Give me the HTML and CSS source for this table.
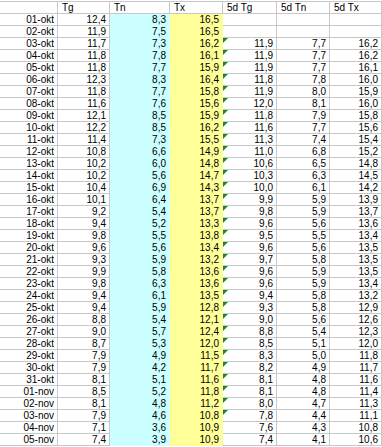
FILE: index.html
```html
<!DOCTYPE html>
<html>
<head>
<meta charset="utf-8">
<link rel="stylesheet" href="styles.css">
</head>
<body>
<div class="sheet">
  <div class="row head"><div class="cell"></div><div class="cell hl">Tg</div><div class="cell hl">Tn</div><div class="cell hl">Tx</div><div class="cell hl">5d Tg</div><div class="cell hl">5d Tn</div><div class="cell hl">5d Tx</div></div>
  <div class="row"><div class="cell">01-okt</div><div class="cell">12,4</div><div class="cell cyan">8,3</div><div class="cell yellow">16,5</div><div class="cell"></div><div class="cell"></div><div class="cell"></div></div>
  <div class="row"><div class="cell">02-okt</div><div class="cell">11,9</div><div class="cell cyan">7,5</div><div class="cell yellow">16,5</div><div class="cell"></div><div class="cell"></div><div class="cell"></div></div>
  <div class="row"><div class="cell">03-okt</div><div class="cell">11,7</div><div class="cell cyan">7,3</div><div class="cell yellow">16,2</div><div class="cell flag">11,9</div><div class="cell">7,7</div><div class="cell">16,2</div></div>
  <div class="row"><div class="cell">04-okt</div><div class="cell">11,8</div><div class="cell cyan">7,8</div><div class="cell yellow">16,1</div><div class="cell flag">11,9</div><div class="cell">7,7</div><div class="cell">16,2</div></div>
  <div class="row"><div class="cell">05-okt</div><div class="cell">11,8</div><div class="cell cyan">7,7</div><div class="cell yellow">15,9</div><div class="cell flag">11,9</div><div class="cell">7,7</div><div class="cell">16,1</div></div>
  <div class="row"><div class="cell">06-okt</div><div class="cell">12,3</div><div class="cell cyan">8,3</div><div class="cell yellow">16,4</div><div class="cell flag">11,8</div><div class="cell">7,8</div><div class="cell">16,0</div></div>
  <div class="row"><div class="cell">07-okt</div><div class="cell">11,8</div><div class="cell cyan">7,7</div><div class="cell yellow">15,8</div><div class="cell flag">11,9</div><div class="cell">8,0</div><div class="cell">15,9</div></div>
  <div class="row"><div class="cell">08-okt</div><div class="cell">11,6</div><div class="cell cyan">7,6</div><div class="cell yellow">15,6</div><div class="cell flag">12,0</div><div class="cell">8,1</div><div class="cell">16,0</div></div>
  <div class="row"><div class="cell">09-okt</div><div class="cell">12,1</div><div class="cell cyan">8,5</div><div class="cell yellow">15,9</div><div class="cell flag">11,8</div><div class="cell">7,9</div><div class="cell">15,8</div></div>
  <div class="row"><div class="cell">10-okt</div><div class="cell">12,2</div><div class="cell cyan">8,5</div><div class="cell yellow">16,2</div><div class="cell flag">11,6</div><div class="cell">7,7</div><div class="cell">15,6</div></div>
  <div class="row"><div class="cell">11-okt</div><div class="cell">11,4</div><div class="cell cyan">7,3</div><div class="cell yellow">15,5</div><div class="cell flag">11,3</div><div class="cell">7,4</div><div class="cell">15,4</div></div>
  <div class="row"><div class="cell">12-okt</div><div class="cell">10,8</div><div class="cell cyan">6,6</div><div class="cell yellow">14,9</div><div class="cell flag">11,0</div><div class="cell">6,8</div><div class="cell">15,2</div></div>
  <div class="row"><div class="cell">13-okt</div><div class="cell">10,2</div><div class="cell cyan">6,0</div><div class="cell yellow">14,8</div><div class="cell flag">10,6</div><div class="cell">6,5</div><div class="cell">14,8</div></div>
  <div class="row"><div class="cell">14-okt</div><div class="cell">10,2</div><div class="cell cyan">5,6</div><div class="cell yellow">14,7</div><div class="cell flag">10,3</div><div class="cell">6,3</div><div class="cell">14,5</div></div>
  <div class="row"><div class="cell">15-okt</div><div class="cell">10,4</div><div class="cell cyan">6,9</div><div class="cell yellow">14,3</div><div class="cell flag">10,0</div><div class="cell">6,1</div><div class="cell">14,2</div></div>
  <div class="row"><div class="cell">16-okt</div><div class="cell">10,1</div><div class="cell cyan">6,4</div><div class="cell yellow">13,7</div><div class="cell flag">9,9</div><div class="cell">5,9</div><div class="cell">13,9</div></div>
  <div class="row"><div class="cell">17-okt</div><div class="cell">9,2</div><div class="cell cyan">5,4</div><div class="cell yellow">13,7</div><div class="cell flag">9,8</div><div class="cell">5,9</div><div class="cell">13,7</div></div>
  <div class="row"><div class="cell">18-okt</div><div class="cell">9,4</div><div class="cell cyan">5,2</div><div class="cell yellow">13,3</div><div class="cell flag">9,6</div><div class="cell">5,6</div><div class="cell">13,6</div></div>
  <div class="row"><div class="cell">19-okt</div><div class="cell">9,8</div><div class="cell cyan">5,5</div><div class="cell yellow">13,8</div><div class="cell flag">9,5</div><div class="cell">5,5</div><div class="cell">13,4</div></div>
  <div class="row"><div class="cell">20-okt</div><div class="cell">9,6</div><div class="cell cyan">5,6</div><div class="cell yellow">13,4</div><div class="cell flag">9,6</div><div class="cell">5,6</div><div class="cell">13,5</div></div>
  <div class="row"><div class="cell">21-okt</div><div class="cell">9,3</div><div class="cell cyan">5,9</div><div class="cell yellow">13,2</div><div class="cell flag">9,7</div><div class="cell">5,8</div><div class="cell">13,5</div></div>
  <div class="row"><div class="cell">22-okt</div><div class="cell">9,9</div><div class="cell cyan">5,8</div><div class="cell yellow">13,6</div><div class="cell flag">9,6</div><div class="cell">5,9</div><div class="cell">13,5</div></div>
  <div class="row"><div class="cell">23-okt</div><div class="cell">9,8</div><div class="cell cyan">6,3</div><div class="cell yellow">13,6</div><div class="cell flag">9,6</div><div class="cell">5,9</div><div class="cell">13,4</div></div>
  <div class="row"><div class="cell">24-okt</div><div class="cell">9,4</div><div class="cell cyan">6,1</div><div class="cell yellow">13,5</div><div class="cell flag">9,4</div><div class="cell">5,8</div><div class="cell">13,2</div></div>
  <div class="row"><div class="cell">25-okt</div><div class="cell">9,4</div><div class="cell cyan">5,9</div><div class="cell yellow">12,8</div><div class="cell flag">9,3</div><div class="cell">5,8</div><div class="cell">12,9</div></div>
  <div class="row"><div class="cell">26-okt</div><div class="cell">8,8</div><div class="cell cyan">5,4</div><div class="cell yellow">12,1</div><div class="cell flag">9,0</div><div class="cell">5,6</div><div class="cell">12,6</div></div>
  <div class="row"><div class="cell">27-okt</div><div class="cell">9,0</div><div class="cell cyan">5,7</div><div class="cell yellow">12,4</div><div class="cell flag">8,8</div><div class="cell">5,4</div><div class="cell">12,3</div></div>
  <div class="row"><div class="cell">28-okt</div><div class="cell">8,7</div><div class="cell cyan">5,3</div><div class="cell yellow">12,0</div><div class="cell flag">8,5</div><div class="cell">5,1</div><div class="cell">12,0</div></div>
  <div class="row"><div class="cell">29-okt</div><div class="cell">7,9</div><div class="cell cyan">4,9</div><div class="cell yellow">11,5</div><div class="cell flag">8,3</div><div class="cell">5,0</div><div class="cell">11,8</div></div>
  <div class="row"><div class="cell">30-okt</div><div class="cell">7,9</div><div class="cell cyan">4,2</div><div class="cell yellow">11,7</div><div class="cell flag">8,2</div><div class="cell">4,9</div><div class="cell">11,7</div></div>
  <div class="row"><div class="cell">31-okt</div><div class="cell">8,1</div><div class="cell cyan">5,1</div><div class="cell yellow">11,6</div><div class="cell flag">8,1</div><div class="cell">4,8</div><div class="cell">11,6</div></div>
  <div class="row"><div class="cell">01-nov</div><div class="cell">8,5</div><div class="cell cyan">5,2</div><div class="cell yellow">11,8</div><div class="cell flag">8,1</div><div class="cell">4,8</div><div class="cell">11,4</div></div>
  <div class="row"><div class="cell">02-nov</div><div class="cell">8,1</div><div class="cell cyan">4,8</div><div class="cell yellow">11,2</div><div class="cell flag">8,0</div><div class="cell">4,7</div><div class="cell">11,3</div></div>
  <div class="row"><div class="cell">03-nov</div><div class="cell">7,9</div><div class="cell cyan">4,6</div><div class="cell yellow">10,8</div><div class="cell flag">7,8</div><div class="cell">4,4</div><div class="cell">11,1</div></div>
  <div class="row"><div class="cell">04-nov</div><div class="cell">7,1</div><div class="cell cyan">3,6</div><div class="cell yellow">10,9</div><div class="cell">7,6</div><div class="cell">4,3</div><div class="cell">10,8</div></div>
  <div class="row"><div class="cell">05-nov</div><div class="cell">7,4</div><div class="cell cyan">3,9</div><div class="cell yellow">10,9</div><div class="cell">7,4</div><div class="cell">4,1</div><div class="cell">10,6</div></div>
</div>
</body>
</html>
```
FILE: styles.css
```css
html, body {
  margin: 0;
  padding: 0;
  background: #ffffff;
}
.sheet {
  width: 382px;
  margin-top: 1px;
  font-family: "Liberation Sans", Arial, sans-serif;
  font-size: 10px;
  color: #000;
}
.row {
  display: grid;
  grid-template-columns: 58px 52px 60px 53px 54px 53px 52px;
  height: 12px;
}
.row.head {
  height: 13px;
}
.row.head .cell {
  border-top: 1px solid #c8c8c8;
  line-height: 12px;
}
.cell {
  box-sizing: border-box;
  border-right: 1px solid #c8c8c8;
  border-bottom: 1px solid #c8c8c8;
  padding: 0 3px;
  text-align: right;
  line-height: 11px;
  white-space: nowrap;
  overflow: hidden;
  position: relative;
}
.cell.hl {
  text-align: left;
  padding-left: 4px;
}
.cyan {
  background: #ccffff;
  border-color: transparent;
}
.yellow {
  background: #ffff99;
  border-color: transparent;
}
.flag::before {
  content: "";
  position: absolute;
  left: 0;
  top: 0;
  width: 0;
  height: 0;
  border-top: 5px solid #1e8a1e;
  border-right: 5px solid transparent;
}
```
